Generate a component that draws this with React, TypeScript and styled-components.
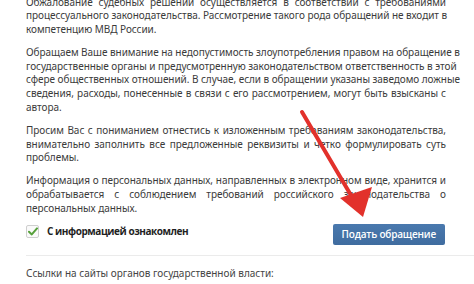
import React from 'react';
import styled, { createGlobalStyle } from 'styled-components';

// =============================================================================
// Styles
// =============================================================================

const GlobalStyle = createGlobalStyle`
  html, body {
    margin: 0;
    padding: 0;
    background: #ffffff;
    overflow: hidden;
  }
  body {
    font-family: "Noto Sans", "Open Sans", "DejaVu Sans", sans-serif;
    color: #3b3b3b;
  }
`;

const Page = styled.div`
  position: relative;
  width: 474px;
  height: 284px;
  overflow: hidden;
  padding-left: 26px;
  box-sizing: border-box;
`;

const Content = styled.div`
  width: 420px;
  margin-top: -4.5px;
`;

const Paragraph = styled.p`
  margin: 0 0 9px;
  font-size: 10px;
  line-height: 13.8px;
  letter-spacing: -0.05px;
`;

const Line = styled.span<{ $last?: boolean }>`
  display: block;
  white-space: nowrap;
  text-align: justify;
  text-align-last: ${(p) => (p.$last ? 'left' : 'justify')};
`;

const ActionRow = styled.div`
  display: flex;
  align-items: flex-start;
  justify-content: space-between;
  margin-top: -1px;
`;

const CheckLabel = styled.label`
  display: flex;
  align-items: center;
  gap: 8px;
  margin-top: 1px;
  font-family: "Open Sans", "Noto Sans", sans-serif;
  font-size: 10px;
  line-height: 13.8px;
  font-weight: 700;
  color: #1f1f1f;
  letter-spacing: -0.45px;
`;

const CheckBox = styled.span`
  display: flex;
  align-items: center;
  justify-content: center;
  width: 11px;
  height: 11px;
  border: 1px solid #cfcfcf;
  border-radius: 2px;
  background: #fafafa;
`;

const SubmitButton = styled.button`
  height: 21px;
  padding: 0 9px;
  margin-right: 1px;
  border: none;
  border-radius: 2px;
  background: linear-gradient(#4a79ae, #3f6c9f);
  color: #ffffff;
  font-family: "Open Sans", "Noto Sans", sans-serif;
  font-size: 10px;
  font-weight: 600;
  letter-spacing: -0.2px;
  cursor: pointer;
`;

const Divider = styled.hr`
  margin: 10px 0 0;
  border: none;
  border-top: 1px solid #ebebeb;
`;

const LinksTitle = styled.div`
  margin-top: 11px;
  font-size: 10px;
  line-height: 13.8px;
  color: #444;
`;

const ArrowLayer = styled.svg`
  position: absolute;
  left: 0;
  top: 0;
  pointer-events: none;
`;

// =============================================================================
// Data
// =============================================================================

const paragraphs: string[][] = [
  [
    'Обжалование судебных решений осуществляется в соответствии с требованиями',
    'процессуального законодательства. Рассмотрение такого рода обращений не входит в',
    'компетенцию МВД России.',
  ],
  [
    'Обращаем Ваше внимание на недопустимость злоупотребления правом на обращение в',
    'государственные органы и предусмотренную законодательством ответственность в этой',
    'сфере общественных отношений. В случае, если в обращении указаны заведомо ложные',
    'сведения, расходы, понесенные в связи с его рассмотрением, могут быть взысканы с',
    'автора.',
  ],
  [
    'Просим Вас с пониманием отнестись к изложенным требованиям законодательства,',
    'внимательно заполнить все предложенные реквизиты и четко формулировать суть',
    'проблемы.',
  ],
  [
    'Информация о персональных данных, направленных в электронном виде, хранится и',
    'обрабатывается с соблюдением требований российского законодательства о',
    'персональных данных.',
  ],
];

// =============================================================================
// App
// =============================================================================

const App = () => (
  <>
    <GlobalStyle />
    <Page>
      <Content>
        {paragraphs.map((lines, i) => (
          <Paragraph key={i}>
            {lines.map((line, j) => (
              <Line key={j} $last={j === lines.length - 1}>
                {line}
              </Line>
            ))}
          </Paragraph>
        ))}
        <ActionRow>
          <CheckLabel>
            <CheckBox>
              <svg width="10" height="9" viewBox="0 0 10 9">
                <path d="M1 4.8 L3.8 7.4 L9 1.4" fill="none" stroke="#56a03a" strokeWidth="2" strokeLinecap="round" strokeLinejoin="round" />
              </svg>
            </CheckBox>
            С информацией ознакомлен
          </CheckLabel>
          <SubmitButton>Подать обращение</SubmitButton>
        </ActionRow>
      </Content>
      <Divider />
      <LinksTitle>Ссылки на сайты органов государственной власти:</LinksTitle>
      <ArrowLayer width="474" height="284" viewBox="0 0 474 284">
        <line x1="302" y1="112" x2="352" y2="197" stroke="#e2312b" strokeWidth="4" strokeLinecap="round" />
        <polygon points="363,217 340,198 372,187" fill="#e2312b" />
      </ArrowLayer>
    </Page>
  </>
);

export default App;
